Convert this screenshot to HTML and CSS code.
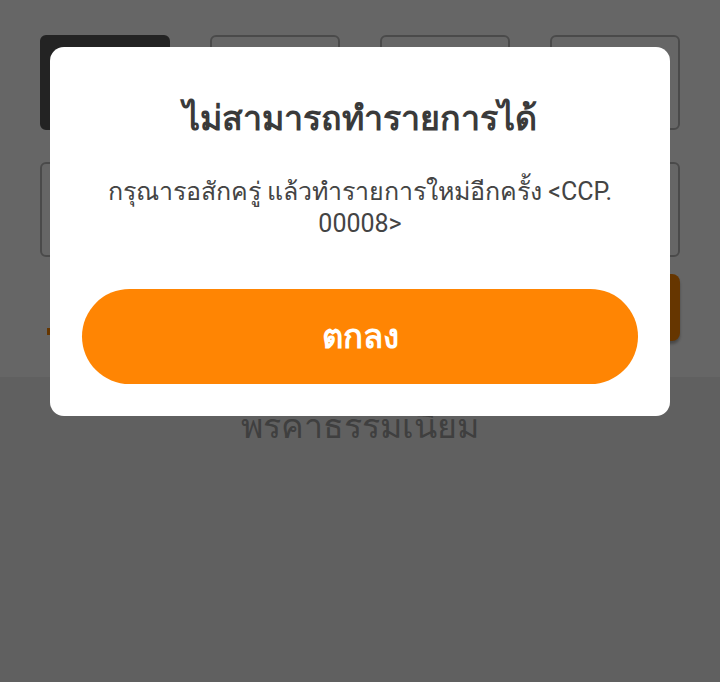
FILE: index.html
```html
<!DOCTYPE html>
<html lang="th">

<head>
    <meta charset="UTF-8">
    <title>ชำระเงิน</title>
    <link rel="stylesheet" href="styles.css">
</head>

<body>
    <!-- หน้าหลักด้านหลัง -->
    <div class="page">
        <div class="top">
            <div class="tiles">
                <div class="tile active"></div>
                <div class="tile"></div>
                <div class="tile"></div>
                <div class="tile"></div>
            </div>
            <div class="cards">
                <div class="tile"></div>
                <div class="tile"></div>
            </div>
            <div class="actions">
                <span class="mark"></span>
                <div class="submit"></div>
            </div>
        </div>
        <div class="bottom">
            <h2 class="fee">พรคาธรรมเนียม</h2>
        </div>
    </div>

    <!-- กล่องแจ้งเตือน -->
    <div class="overlay">
        <div class="dialog">
            <h1 class="title">ไม่สามารถทำรายการได้</h1>
            <p class="msg">กรุณารอสักครู่ แล้วทำรายการใหม่อีกครั้ง &lt;CCP.<br>00008&gt;</p>
            <button class="ok">ตกลง</button>
        </div>
    </div>
</body>

</html>
```

FILE: styles.css
```css
html, body {
    margin: 0;
    height: 100%;
}

body {
    /* ฟอนต์ไทยใช้ตัวสำรองของระบบ (มีหัว) */
    font-family: Roboto, sans-serif;
    background: #f0f0f0;
    overflow: hidden;
}

/* ---- หน้าหลัก ---- */
.page {
    display: flex;
    flex-direction: column;
    height: 100%;
}

.top {
    background: #ffffff;
    padding: 35px 40px 36px;
    display: flex;
    flex-direction: column;
    gap: 33px;
}

.tiles {
    display: grid;
    grid-template-columns: repeat(4, 1fr);
    gap: 40px;
}

.cards {
    display: grid;
    grid-template-columns: repeat(2, 1fr);
    gap: 40px;
    margin-top: -1px;
}

.tile {
    height: 91px;
    border: 2px solid #b9b9b9;
    border-radius: 6px;
}

.tile.active {
    background: #575757;
    border-color: #575757;
}

.actions {
    display: flex;
    align-items: flex-end;
    gap: 2px;
    margin-top: -16px;
    padding-left: 7px;
}

.mark {
    width: 4px;
    height: 7px;
    margin-bottom: 6px;
    background: #ff8800;
}

.submit {
    flex: 1;
    height: 67px;
    background: #ff8800;
    border-radius: 8px;
    box-shadow: 0 3px 3px rgba(0, 0, 0, 0.3);
}

.bottom {
    flex: 1;
    background: #f0f0f0;
}

.fee {
    margin: 25px 0 0;
    text-align: center;
    font-size: 34px;
    font-weight: 400;
    line-height: 48px;
    color: #9e9e9e;
}

/* ---- กล่องแจ้งเตือน ---- */
.overlay {
    position: fixed;
    inset: 0;
    background: rgba(0, 0, 0, 0.6);
    display: flex;
    justify-content: center;
    align-items: flex-start;
    padding-top: 47px;
}

.dialog {
    width: 620px;
    box-sizing: border-box;
    background: #ffffff;
    border-radius: 14px;
    padding: 48px 32px 32px;
    text-align: center;
}

.title {
    margin: 0;
    font-size: 34px;
    font-weight: 700;
    line-height: 47px;
    color: #3a3a3a;
}

.msg {
    margin: 34px 0 0;
    font-size: 25px;
    line-height: 32px;
    color: #444444;
}

.ok {
    display: block;
    width: 100%;
    height: 95px;
    margin-top: 49px;
    border: none;
    border-radius: 48px;
    background: #ff8503;
    color: #ffffff;
    font-family: inherit;
    font-size: 33px;
    font-weight: 700;
}
```
